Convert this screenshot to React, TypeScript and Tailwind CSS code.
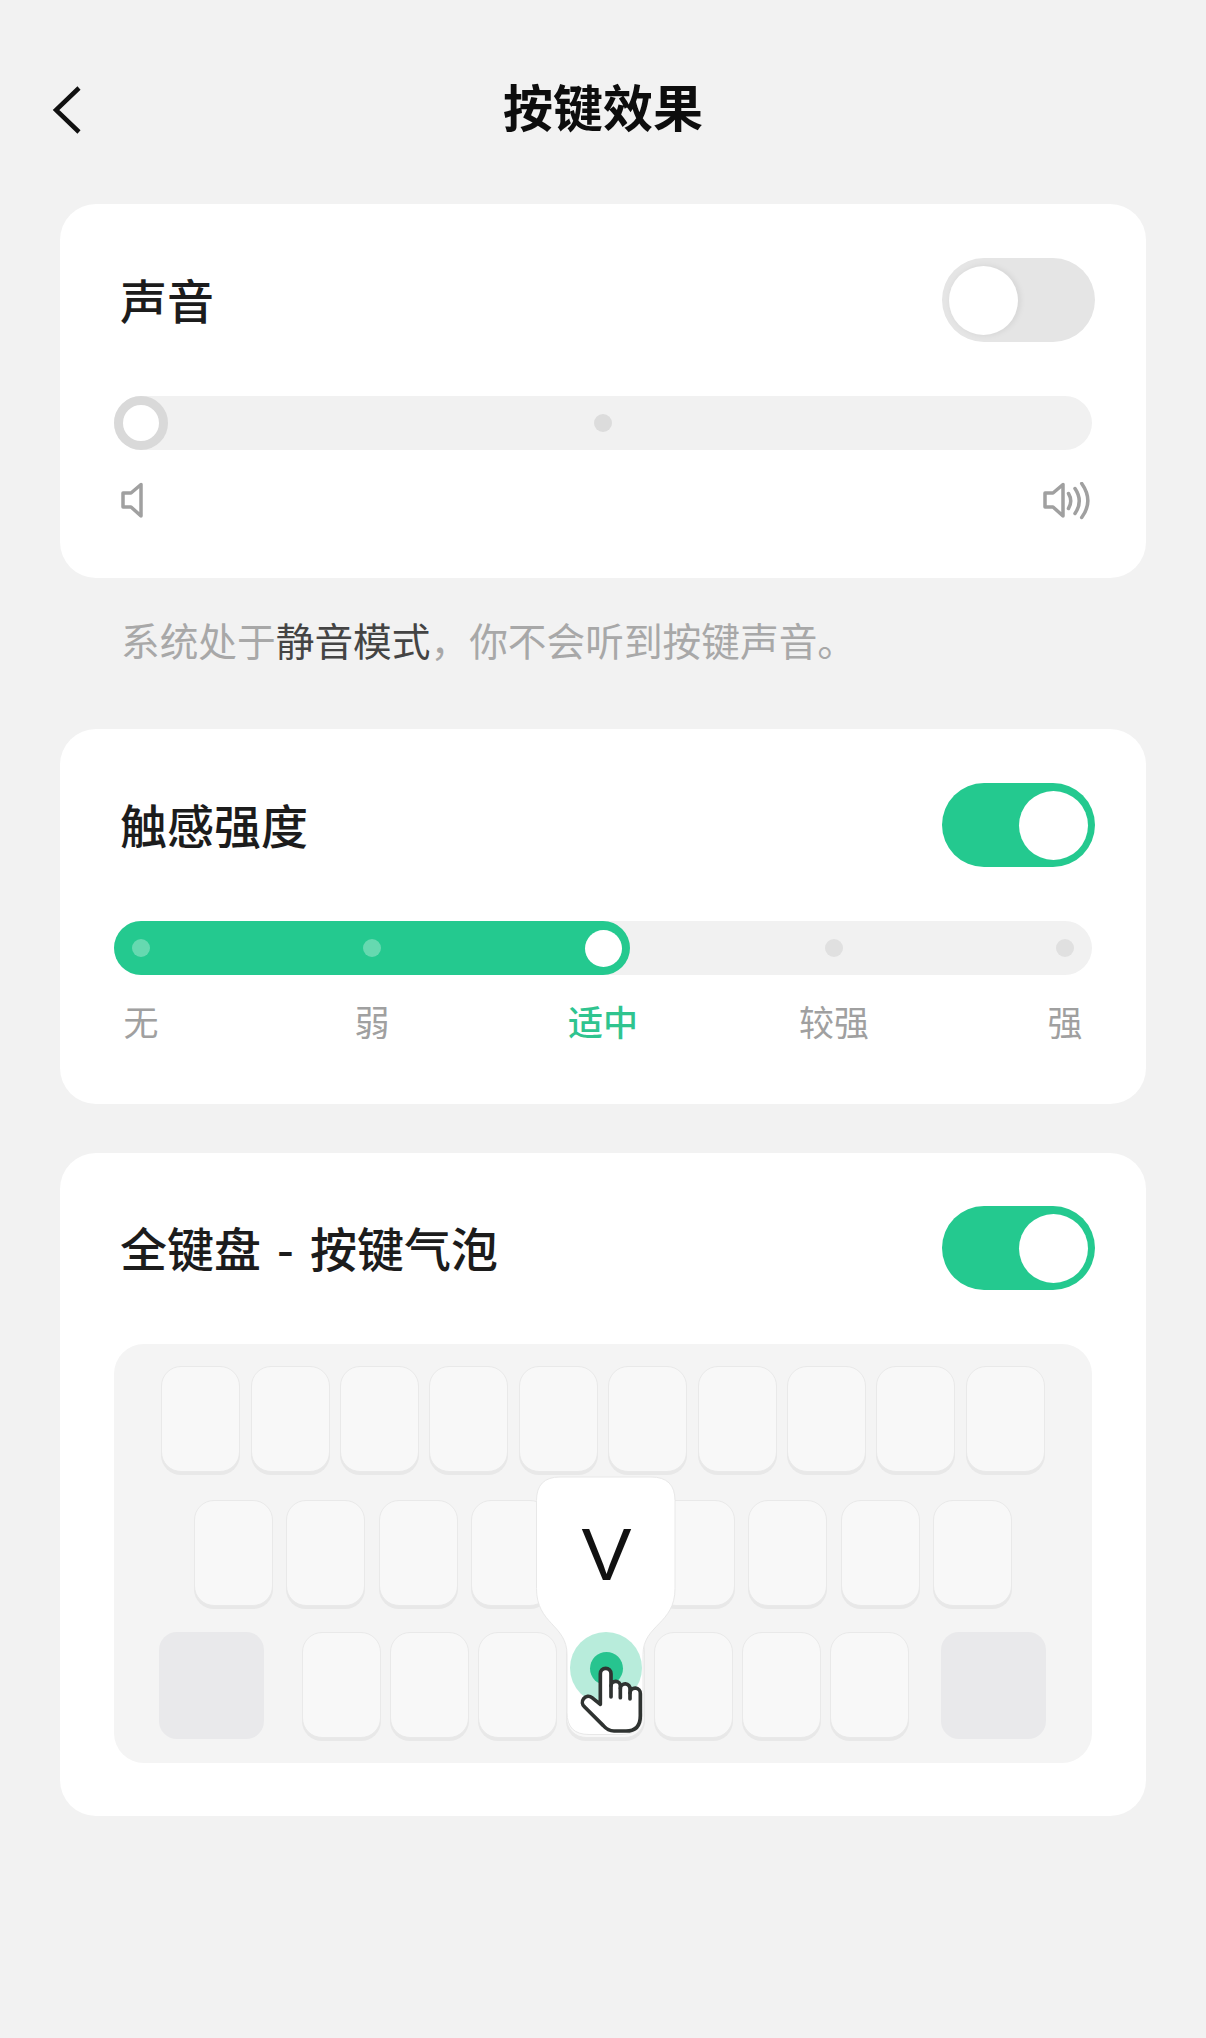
import React from 'react';

const levels = ['无', '弱', '适中', '较强', '强'];

function Toggle({ on }: { on: boolean }) {
  return (
    <div className={`flex h-[84px] w-[153px] items-center rounded-full px-[7px] -mr-[3px] ${on ? 'justify-end bg-[#24c98f]' : 'justify-start bg-[#e5e5e5]'}`}>
      <div className={`h-[69px] w-[69px] rounded-full bg-white ${on ? '' : 'shadow-[2px_0_6px_rgba(0,0,0,0.08)]'}`} />
    </div>
  );
}

function CardHeader({ title, on }: { title: string; on: boolean }) {
  return (
    <div className="flex items-center justify-between">
      <span className="pl-[6px] pb-[3px] text-[47px] leading-[80px] font-medium text-[#1c1c1c] [word-spacing:5.5px]">{title}</span>
      <Toggle on={on} />
    </div>
  );
}

function Key() {
  return <div className="h-[106px] w-[79px] rounded-[20px] border border-[#e9e9e9] bg-[#f8f8f8] shadow-[0_3px_0_#e8e8e8]" />;
}

function BigKey() {
  return <div className="h-[107px] w-[105px] rounded-[18px] bg-[#e9e9eb]" />;
}

function KeyRow({ count, gap }: { count: number; gap: string }) {
  return (
    <div className={`flex justify-center ${gap}`}>
      {Array.from({ length: count }).map((_, i) => (
        <Key key={i} />
      ))}
    </div>
  );
}

function SpeakerSmall() {
  return (
    <svg width="24" height="38" viewBox="0 0 24 38" fill="none" stroke="#a0a0a0" strokeWidth="3.5" strokeLinejoin="round">
      <path d="M2 11 H10 L20 2.5 V34 L10 25 H2 Z" />
    </svg>
  );
}

function SpeakerLarge() {
  return (
    <svg width="48" height="38" viewBox="0 0 48 38" fill="none" stroke="#a0a0a0" strokeWidth="3.5" strokeLinecap="round" strokeLinejoin="round">
      <path d="M2 11 H10 L20 2.5 V34 L10 25 H2 Z" />
      <path d="M25.5 11.5 Q30 19 25.5 26.5" />
      <path d="M32 6.5 Q40.5 19 32 31.5" />
      <path d="M38.7 1.5 Q51 19 38.7 35.5" />
    </svg>
  );
}

// Press marker on the V key: bubble, touch ring and the pointing hand
function KeyBubble() {
  return (
    <div className="absolute left-[422px] top-[132px] h-[259px] w-[140px]">
      <svg className="absolute left-0 top-0" width="140" height="260" viewBox="0 0 140 259" fill="#ffffff" stroke="#e8e8e8" strokeWidth="1">
        <path d="M24 0.5 H115 Q139 0.5 139 24 V112 C139 148 107 148 107 178 V236 Q107 258 85 258 H53 Q31 258 31 236 V178 C31 148 0.5 148 0.5 112 V24 Q0.5 0.5 24 0.5 Z" />
      </svg>
      <div className="absolute left-[1px] top-[35px] w-[139px] text-center font-['Liberation_Sans',sans-serif] text-[75px] leading-[86px] text-[#111111]">V</div>
      <div className="absolute left-[34px] top-[156px] flex h-[72px] w-[72px] items-center justify-center rounded-full bg-[#b8ecdb]">
        <div className="h-[33px] w-[33px] rounded-full bg-[#27c48f]" />
      </div>
      <svg className="absolute left-[34px] top-[149px]" width="85" height="115" viewBox="0 0 255 345" fill="#ffffff" stroke="#2f3331" strokeWidth="11" strokeLinecap="round" strokeLinejoin="round">
        <path d="M91 146 a16 16 0 0 1 32 0 V182 a14 14 0 0 1 28 2 V190 a14 14 0 0 1 29 2 V204 a15 15 0 0 1 31 2 V272 Q211 318 168 318 H132 Q114 318 100 302 L44 246 a15 15 0 0 1 22 -28 L91 238 Z" />
        <path d="M123 182 V216 M151 190 V218 M180 204 V222" fill="none" />
      </svg>
    </div>
  );
}

export default function App() {
  return (
    <div className="min-h-[2038px] bg-[#f2f2f2] px-[60px] font-['Noto_Sans_CJK_SC',sans-serif]">
      {/* Top bar */}
      <div className="-mx-[60px] grid h-[204px] grid-cols-[1fr_auto_1fr] items-start px-[52px] pt-[66px]">
        <svg className="mt-[20px]" width="30" height="48" viewBox="0 0 30 48" fill="none" stroke="#111111" strokeWidth="4.5">
          <path d="M27 2 L4 24 L27 46" />
        </svg>
        <h1 className="text-[50px] leading-[78px] font-bold text-[#0d0d0d]">按键效果</h1>
      </div>

      {/* Sound */}
      <section className="rounded-[36px] bg-white pl-[54px] pr-[54px] pt-[54px] pb-[58px]">
        <CardHeader title="声音" on={false} />
        <div className="mt-[54px] flex h-[54px] items-center justify-between rounded-full bg-[#f1f1f1]">
          <div className="h-[54px] w-[54px] rounded-full border-[9px] border-[#d9d9d9] bg-white" />
          <div className="h-[18px] w-[18px] rounded-full bg-[#dcdcdc]" />
          <div className="w-[54px]" />
        </div>
        <div className="mt-[32px] flex justify-between pl-[7px] pr-[1px]">
          <SpeakerSmall />
          <SpeakerLarge />
        </div>
      </section>

      <p className="h-[151px] pl-[61px] pt-[37px] text-[38.7px] leading-[48px] text-[#a8a8a8]">
        系统处于<span className="text-[#444444]">静音模式</span>，你不会听到按键声音。
      </p>

      {/* Haptics */}
      <section className="rounded-[36px] bg-white px-[54px] pt-[54px] pb-[61px]">
        <CardHeader title="触感强度" on />
        <div className="relative mt-[54px] h-[54px] rounded-full bg-[#f1f1f1]">
          <div className="absolute left-0 top-0 h-[54px] w-[516px] rounded-full bg-[#24c98f]" />
          <div className="relative flex h-[54px] items-center justify-between">
            {levels.map((level, i) => (
              <div key={level} className="flex w-[54px] justify-center">
                {i === 2 ? (
                  <div className="h-[37px] w-[37px] rounded-full bg-white" />
                ) : (
                  <div className={`h-[18px] w-[18px] rounded-full ${i < 2 ? 'bg-white/30' : 'bg-[#e0e0e0]'}`} />
                )}
              </div>
            ))}
          </div>
        </div>
        <div className="mt-[24px] flex justify-between">
          {levels.map((level, i) => (
            <div key={level} className="flex w-[54px] justify-center">
              <span className={`whitespace-nowrap text-[35px] leading-[44px] ${i === 2 ? 'font-medium text-[#2fc48f]' : 'text-[#a0a0a0]'}`}>{level}</span>
            </div>
          ))}
        </div>
      </section>

      {/* Key bubble */}
      <section className="mt-[49px] rounded-[36px] bg-white px-[54px] pt-[53px] pb-[53px]">
        <CardHeader title="全键盘 - 按键气泡" on />
        <div className="relative mt-[54px] h-[419px] rounded-[30px] bg-[#f4f4f4] pt-[22px]">
          <KeyRow count={10} gap="gap-[10.4px]" />
          <div className="mt-[28px]">
            <KeyRow count={9} gap="gap-[13.4px]" />
          </div>
          <div className="mt-[26px] flex pl-[45px]">
            <BigKey />
            <div className="ml-[38px] flex gap-[9px]">
              {Array.from({ length: 7 }).map((_, i) => (
                <Key key={i} />
              ))}
            </div>
            <div className="ml-[32px]">
              <BigKey />
            </div>
          </div>
          <KeyBubble />
        </div>
      </section>
    </div>
  );
}
